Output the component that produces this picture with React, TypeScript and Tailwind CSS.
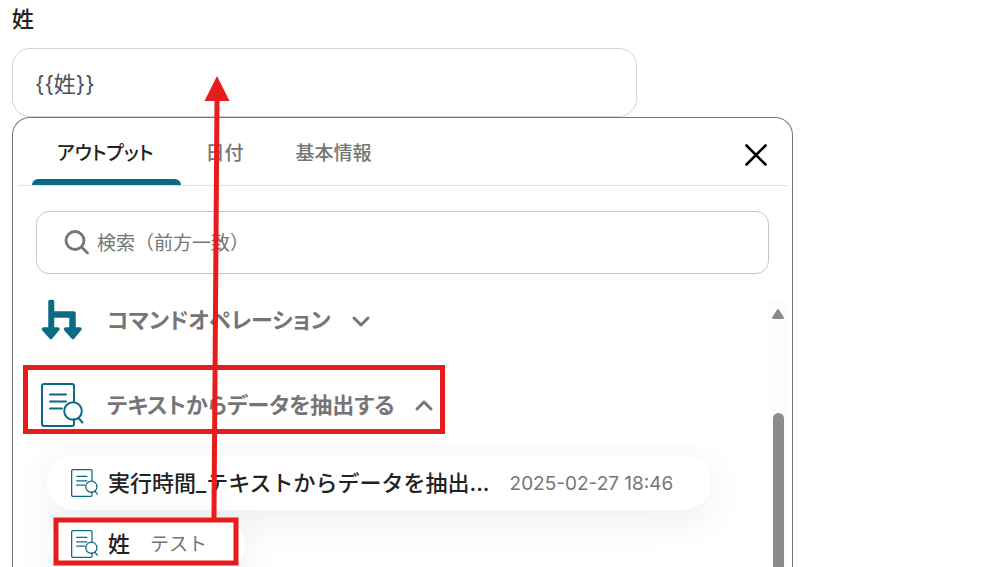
import { useState } from 'react';

const TABS = ['アウトプット', '日付', '基本情報'];

function CommandIcon() {
  return (
    <svg className="w-11 h-11 shrink-0" viewBox="0 0 44 44" fill="#0b6b83" stroke="#0b6b83" strokeLinejoin="round">
      <path d="M9 2.500h2.500v11.500H33V30h6l-7 8.500L24.500 30H30V17H11.500v13H17l-7 8.500L2.500 30H9z" strokeWidth="3.500" />
    </svg>
  );
}

function ExtractIcon({ className }: { className: string }) {
  return (
    <svg className={className} viewBox="0 0 44 44" fill="none" stroke="#0b6b83" strokeWidth="2" strokeLinecap="round">
      <path d="M33 18V3a2 2 0 0 0-2-2H3a2 2 0 0 0-2 2v38a2 2 0 0 0 2 2h28a2 2 0 0 0 2-2v-5" />
      <path d="M9 11.500h16M9 18.500h16M9 25.500h12" />
      <circle cx="32" cy="28" r="8.800" />
      <path d="m37.500 35 4 4.500" />
    </svg>
  );
}

function Chevron({ up = false }: { up?: boolean }) {
  return (
    <svg className="w-5 h-5" viewBox="0 0 20 20" fill="none" stroke="#757575" strokeWidth="3" strokeLinecap="round" strokeLinejoin="round">
      <path d={up ? 'M3 14l7-7 7 7' : 'M3 7l7 7 7-7'} />
    </svg>
  );
}

// Red boxes and the arrow that explain where the value goes
function Annotations() {
  return (
    <svg className="absolute left-0 top-0 pointer-events-none" width="800" height="567" viewBox="0 0 800 567" fill="none" stroke="#e81c1c" strokeWidth="5">
      <rect x="25.500" y="367.500" width="417" height="64" />
      <rect x="56" y="520" width="180" height="43" />
      <path d="M214 518L217 100" />
      <path d="M217 76l12.500 25h-25z" fill="#e81c1c" stroke="none" />
    </svg>
  );
}

export default function App() {
  const [value, setValue] = useState('{{姓}}');
  const [query, setQuery] = useState('');
  const [tab, setTab] = useState(TABS[0]);

  return (
    <div className="relative h-screen overflow-hidden flex flex-col bg-white px-3 text-[#222] font-[Inter,'Noto_Sans_CJK_JP',sans-serif]">
      <label htmlFor="last-name" className="h-12 shrink-0 pt-1 text-[22px] leading-[30px] font-medium">姓</label>
      <input
        id="last-name"
        value={value}
        onChange={e => setValue(e.target.value)}
        className="w-full max-w-[625px] h-[69px] shrink-0 rounded-[18px] border border-[#cfd3da] px-[22px] pb-0.5 text-[22px] text-[#4b5058] outline-none"
      />

      <section className="w-full max-w-[781px] flex-1 min-h-0 flex flex-col rounded-t-[18px] border border-b-0 border-[#757575]">
        <div className="h-[68px] shrink-0 ml-[5px] mr-1 pl-3.5 pr-5 flex items-end justify-between border-b border-[#e0e0e0]">
          <div role="tablist" className="h-full flex">
            {TABS.map(name => (
              <button
                key={name}
                role="tab"
                aria-selected={tab === name}
                onClick={() => setTab(name)}
                className={`relative h-full pl-[25px] pr-[27px] pt-1.5 text-[19px] font-medium [font-feature-settings:'palt'] ${tab === name ? 'text-[#222]' : 'text-[#757575]'}`}
              >
                {name}
                {tab === name && <span className="absolute inset-x-0 bottom-0 h-1.5 rounded-t-md bg-[#0b6b83]" />}
              </button>
            ))}
          </div>
          <button aria-label="閉じる" className="mb-[18px]">
            <svg className="w-6 h-6" viewBox="0 0 24 24" fill="none" stroke="#000" strokeWidth="2.600" strokeLinecap="round">
              <path d="M2.500 2.500l19 19M21.500 2.500l-19 19" />
            </svg>
          </button>
        </div>

        <label className="h-[63px] shrink-0 mx-[23px] mt-[25px] pl-[27px] flex items-center gap-[7px] rounded-[13px] border border-[#c6c6c6]">
          <svg className="w-[26px] h-[26px] shrink-0" viewBox="0 0 26 26" fill="none" stroke="#757575" strokeWidth="2.800" strokeLinecap="round">
            <circle cx="11" cy="10.500" r="9" />
            <path d="M18 17.500l5.500 5.500" />
          </svg>
          <input
            aria-label="検索"
            value={query}
            onChange={e => setQuery(e.target.value)}
            placeholder="検索（前方一致）"
            className="w-full min-w-0 pt-1 text-[19px] outline-none placeholder:text-[#757575]"
          />
        </label>

        <div className="flex-1 min-h-0 mt-[25px] mr-[5px] flex">
          <div className="flex-1 min-w-0 overflow-hidden">
            <button className="h-[43px] ml-7 flex items-center text-[22px] font-bold text-[#757575] [font-feature-settings:'palt']">
              <CommandIcon />
              <span className="ml-[22px] mr-5">コマンドオペレーション</span>
              <Chevron />
            </button>
            <button className="h-10 mt-[43px] ml-7 flex items-center text-[22px] font-bold text-[#757575] [font-feature-settings:'palt']">
              <ExtractIcon className="w-11 h-11 shrink-0" />
              <span className="ml-[22px] mr-5">テキストからデータを抽出する</span>
              <Chevron up />
            </button>

            <div className="mt-[19px] pt-3 pb-16 pl-[34px] overflow-hidden flex flex-col items-start gap-[7px]">
              <button className="h-[54px] pl-6 pr-[38px] flex items-center rounded-full bg-white shadow-[0_8px_40px_rgba(0,0,0,0.08)]">
                <ExtractIcon className="w-7 h-7 shrink-0" />
                <span className="ml-[9px] text-[22px] font-medium whitespace-nowrap">実行時間_テキストからデータを抽出...</span>
                <span className="ml-5 pt-0.5 text-[19px] text-[#757575] whitespace-nowrap">2025-02-27 18:46</span>
              </button>
              <button className="h-[54px] pl-6 pr-[38px] flex items-center rounded-full bg-white shadow-[0_8px_40px_rgba(0,0,0,0.08)]">
                <ExtractIcon className="w-7 h-7 shrink-0" />
                <span className="ml-[9px] text-[22px] font-medium">姓</span>
                <span className="ml-5 pt-0.5 text-[19px] text-[#757575]">テスト</span>
              </button>
            </div>
          </div>

          <div className="w-[18px] shrink-0 flex flex-col items-center bg-[#fcfcfc]">
            <svg className="w-3 h-3 mt-[9px] shrink-0" viewBox="0 0 12 12" fill="#8b8b8b" stroke="#8b8b8b" strokeLinejoin="round">
              <path d="M6 2l5 8H1z" strokeWidth="2" />
            </svg>
            <div className="w-[11px] flex-1 mt-[93px] rounded-t-full bg-[#8b8b8b]" />
          </div>
        </div>
      </section>

      <Annotations />
    </div>
  );
}
